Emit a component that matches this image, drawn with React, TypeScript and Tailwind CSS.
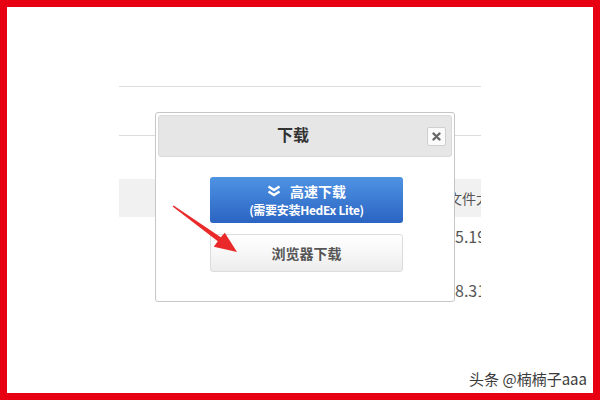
import React from "react";

const cjk = { fontFamily: '"Microsoft YaHei","Noto Sans CJK SC","Liberation Sans",sans-serif' };

export default function App() {
  return (
    <div className="relative w-[600px] h-[400px] bg-[#e60012] p-[7px]" style={cjk}>
      <div className="w-full h-full bg-white overflow-hidden">
        <div className="ml-[112px] w-[362px] pt-[79px] overflow-hidden">
          <div className="border-t border-[#dcdcdc] h-[49px]" />
          <div className="border-t border-[#dcdcdc] h-[44px]" />
          <div className="h-[38px] bg-[#f1f1f1] flex items-center pl-[329px] text-[14px] text-[#555] whitespace-nowrap">
            文件大小
          </div>
          <div className="h-[38px] flex items-center pl-[336px] text-[16px] text-[#555] whitespace-nowrap">
            5.19 MB
          </div>
          <div className="h-[36px] flex items-center pl-[336px] text-[16px] text-[#555] whitespace-nowrap mt-[17px]">
            8.31 MB
          </div>
        </div>
      </div>

      {/* Modal */}
      <div className="absolute left-[155px] top-[112px] w-[300px] h-[190px] bg-white border border-[#c6c6c6] rounded-[3px] p-[2px] flex flex-col">
        <div className="h-[42px] bg-[#e6e6e6] border border-[#dadada] rounded-[3px] flex items-center">
          <div className="w-[268px] text-center text-[16px] font-bold text-[#333] -mt-[5px]">下载</div>
          <div className="w-[19px] h-[19px] bg-[#fafafa] border border-[#cfcfcf] rounded-[2px] flex items-center justify-center">
            <svg width="9" height="9" viewBox="0 0 9 9">
              <path d="M1.5 1.5 L7.5 7.5 M7.5 1.5 L1.5 7.5" stroke="#666" strokeWidth="2.4" strokeLinecap="round" />
            </svg>
          </div>
        </div>
        <div className="flex flex-col items-center pt-[20px] gap-[11px] pl-[3px]">
          <div className="w-[193px] h-[46px] rounded-[3px] bg-gradient-to-b from-[#4f93e3] to-[#2b64c2] flex flex-col items-center justify-center text-white font-bold">
            <div className="flex items-center gap-[9px] text-[14px] leading-[18px]">
              <svg width="14" height="12" viewBox="0 0 14 12">
                <path d="M1.5 1.5 L7 5 L12.5 1.5 M1.5 6.5 L7 10 L12.5 6.5" stroke="white" strokeWidth="2.6" fill="none" strokeLinejoin="miter" />
              </svg>
              <span>高速下载</span>
            </div>
            <div className="text-[12px] leading-[16px] mt-[2px] tracking-[-0.3px]">(需要安装HedEx Lite)</div>
          </div>
          <div className="w-[193px] h-[38px] rounded-[3px] border border-[#dcdcdc] bg-gradient-to-b from-white via-[#f7f7f7] to-[#ececec] flex items-center justify-center text-[14px] font-bold text-[#555]">
            浏览器下载
          </div>
        </div>
      </div>

      {/* Red arrow */}
      <svg className="absolute left-0 top-0 pointer-events-none" width="600" height="400">
        <polygon
          points="172.6,206.6 173.6,205.6 220.8,237.2 224.8,232.7 237,252 213.8,246.7 217.8,241.2"
          fill="#ea2a2a"
        />
      </svg>

      {/* Watermark */}
      <div
        className="absolute right-[13px] top-[369px] text-[15px] leading-[20px] text-[#3a3a3a] whitespace-nowrap"
        style={{ textShadow: "0 0 2px #fff, 0 0 2px #fff, 0 0 3px #fff" }}
      >
        头条 @楠楠子aaa
      </div>
    </div>
  );
}
